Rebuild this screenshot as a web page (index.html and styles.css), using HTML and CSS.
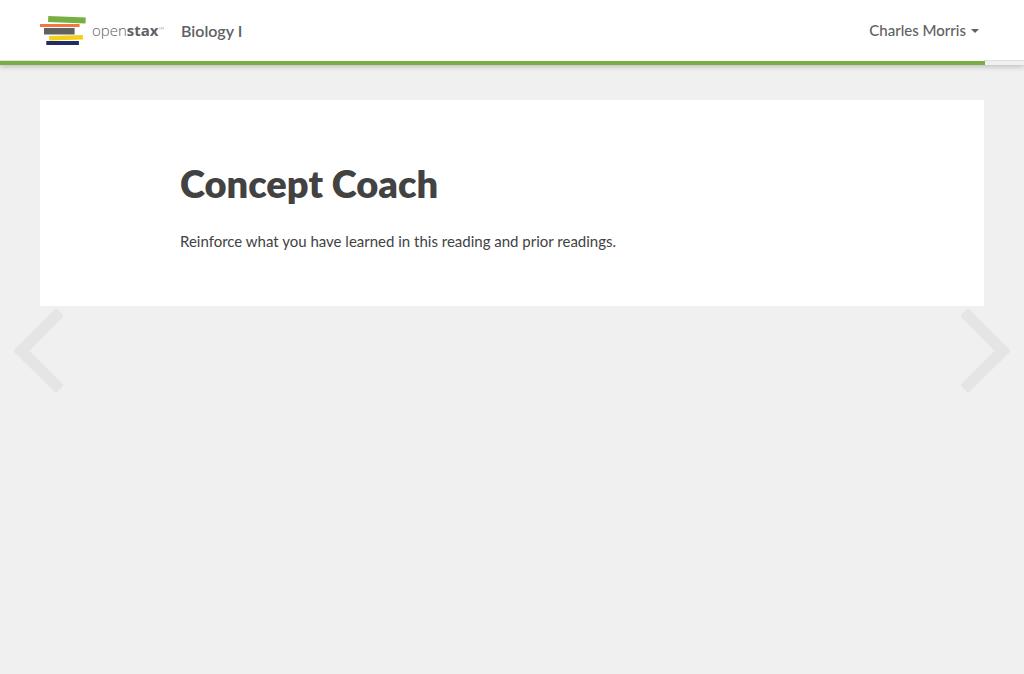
FILE: index.html
```html
<!DOCTYPE html>
<html lang="en">
<head>
<meta charset="utf-8">
<meta name="viewport" content="width=device-width, initial-scale=1">
<title>Concept Coach - Biology I</title>
<link rel="stylesheet" href="styles.css">
</head>
<body>
<header class="header">
  <div class="header-main">
    <nav class="navbar">
      <a class="brand" href="#" aria-label="openstax">
        <svg class="brand-books" viewBox="0 0 46 30" aria-hidden="true">
          <path fill="#77af42" d="M8.300 0 45.800 1.500 45.500 7.600 8 6z"/>
          <path fill="#f47741" d="M0 8h39.600v3H0z"/>
          <path fill="#5f6163" d="M4 12h30.600v6.500H4z"/>
          <path fill="#f4d019" d="M9 20 42.800 19 43 23.400 9.300 24.400z"/>
          <path fill="#232b66" d="M6.300 25h32.600v4H6.300z"/>
        </svg>
        <span class="brand-name">open<b>stax</b></span><span class="brand-mark">™</span>
      </a>
      <a class="course" href="#">Biology I</a>
      <button class="user" type="button">Charles Morris <span class="caret"></span></button>
    </nav>
  </div>
  <div class="progress"><div class="progress-bar"></div></div>
</header>
<main class="page">
  <article class="card">
    <h1 class="title">Concept Coach</h1>
    <p class="intro">Reinforce what you have learned in this reading and prior readings.</p>
  </article>
</main>
<button class="arrow arrow-prev" type="button" aria-label="Previous">
  <svg class="arrow-icon" viewBox="0 0 49 84" aria-hidden="true"><path d="M2.500 42 42 2.500 46.500 7 12 42 46.500 76 42 80.500z"/></svg>
</button>
<button class="arrow arrow-next" type="button" aria-label="Next">
  <svg class="arrow-icon" viewBox="0 0 49 84" aria-hidden="true"><path d="M46.500 42 7 2.500 2.500 7 37 42 2.500 76 7 80.500z"/></svg>
</button>
</body>
</html>
```
FILE: styles.css
```css
* { box-sizing: border-box; }

body {
  margin: 0;
  background: #f0f0f0;
  color: #424242;
  font-family: Lato, "Liberation Sans", sans-serif;
  font-size: 15px;
  line-height: 24px;
}

.header {
  background: #fff;
  box-shadow: 0 2px 5px rgba(0, 0, 0, 0.2);
}

.header-main {
  display: flow-root;
  border-bottom: 1px solid #e0e0e0;
}

.navbar {
  position: relative;
  display: flex;
  align-items: center;
  height: 61px;
  margin: 0 40px -1px;
  padding-right: 5px;
  background: #fff;
}

.brand {
  display: flex;
  align-items: center;
  width: 126px;
  padding-top: 1px;
  color: #5f6163;
  text-decoration: none;
}

.brand-books {
  width: 46px;
  height: 30px;
  margin-right: 6px;
}

.brand-name {
  padding-bottom: 2px;
  font-family: "Open Sans", Lato, sans-serif;
  font-size: 15px;
  font-weight: 300;
}

.brand-name b { font-weight: 700; }

.brand-mark {
  padding-bottom: 2px;
  font-size: 8px;
  font-weight: 300;
  line-height: 16px;
}

.course {
  margin: 1px auto 0 15px;
  color: #5f6163;
  font-size: 16px;
  font-weight: 600;
  text-decoration: none;
}

.user {
  display: flex;
  align-items: center;
  gap: 5px;
  padding: 0 0 2px;
  border: 0;
  background: none;
  color: #5f6163;
  font: inherit;
  font-weight: 500;
  cursor: pointer;
}

.caret {
  margin-top: 3px;
  border-top: 4px solid #5f6163;
  border-right: 4px solid transparent;
  border-left: 4px solid transparent;
}

.progress {
  height: 4px;
  background: #f0f0f0;
}

.progress-bar {
  width: calc(100% - 39px);
  height: 100%;
  background: #77af42;
}

.page { padding: 35px 40px; }

.card {
  padding: 59px 140px 53px;
  background: #fff;
}

.title {
  margin: 0 0 22px;
  font-size: 38px;
  font-weight: 800;
  line-height: 48px;
}

.intro { margin: 0; }

.arrow {
  position: absolute;
  top: 309px;
  padding: 0;
  border: 0;
  background: none;
  cursor: pointer;
}

.arrow-prev { left: 14px; }
.arrow-next { right: 14px; }

.arrow-icon {
  display: block;
  width: 49px;
  height: 84px;
  fill: #e5e5e5;
  stroke: #e5e5e5;
  stroke-width: 5px;
  stroke-linejoin: round;
}
```
